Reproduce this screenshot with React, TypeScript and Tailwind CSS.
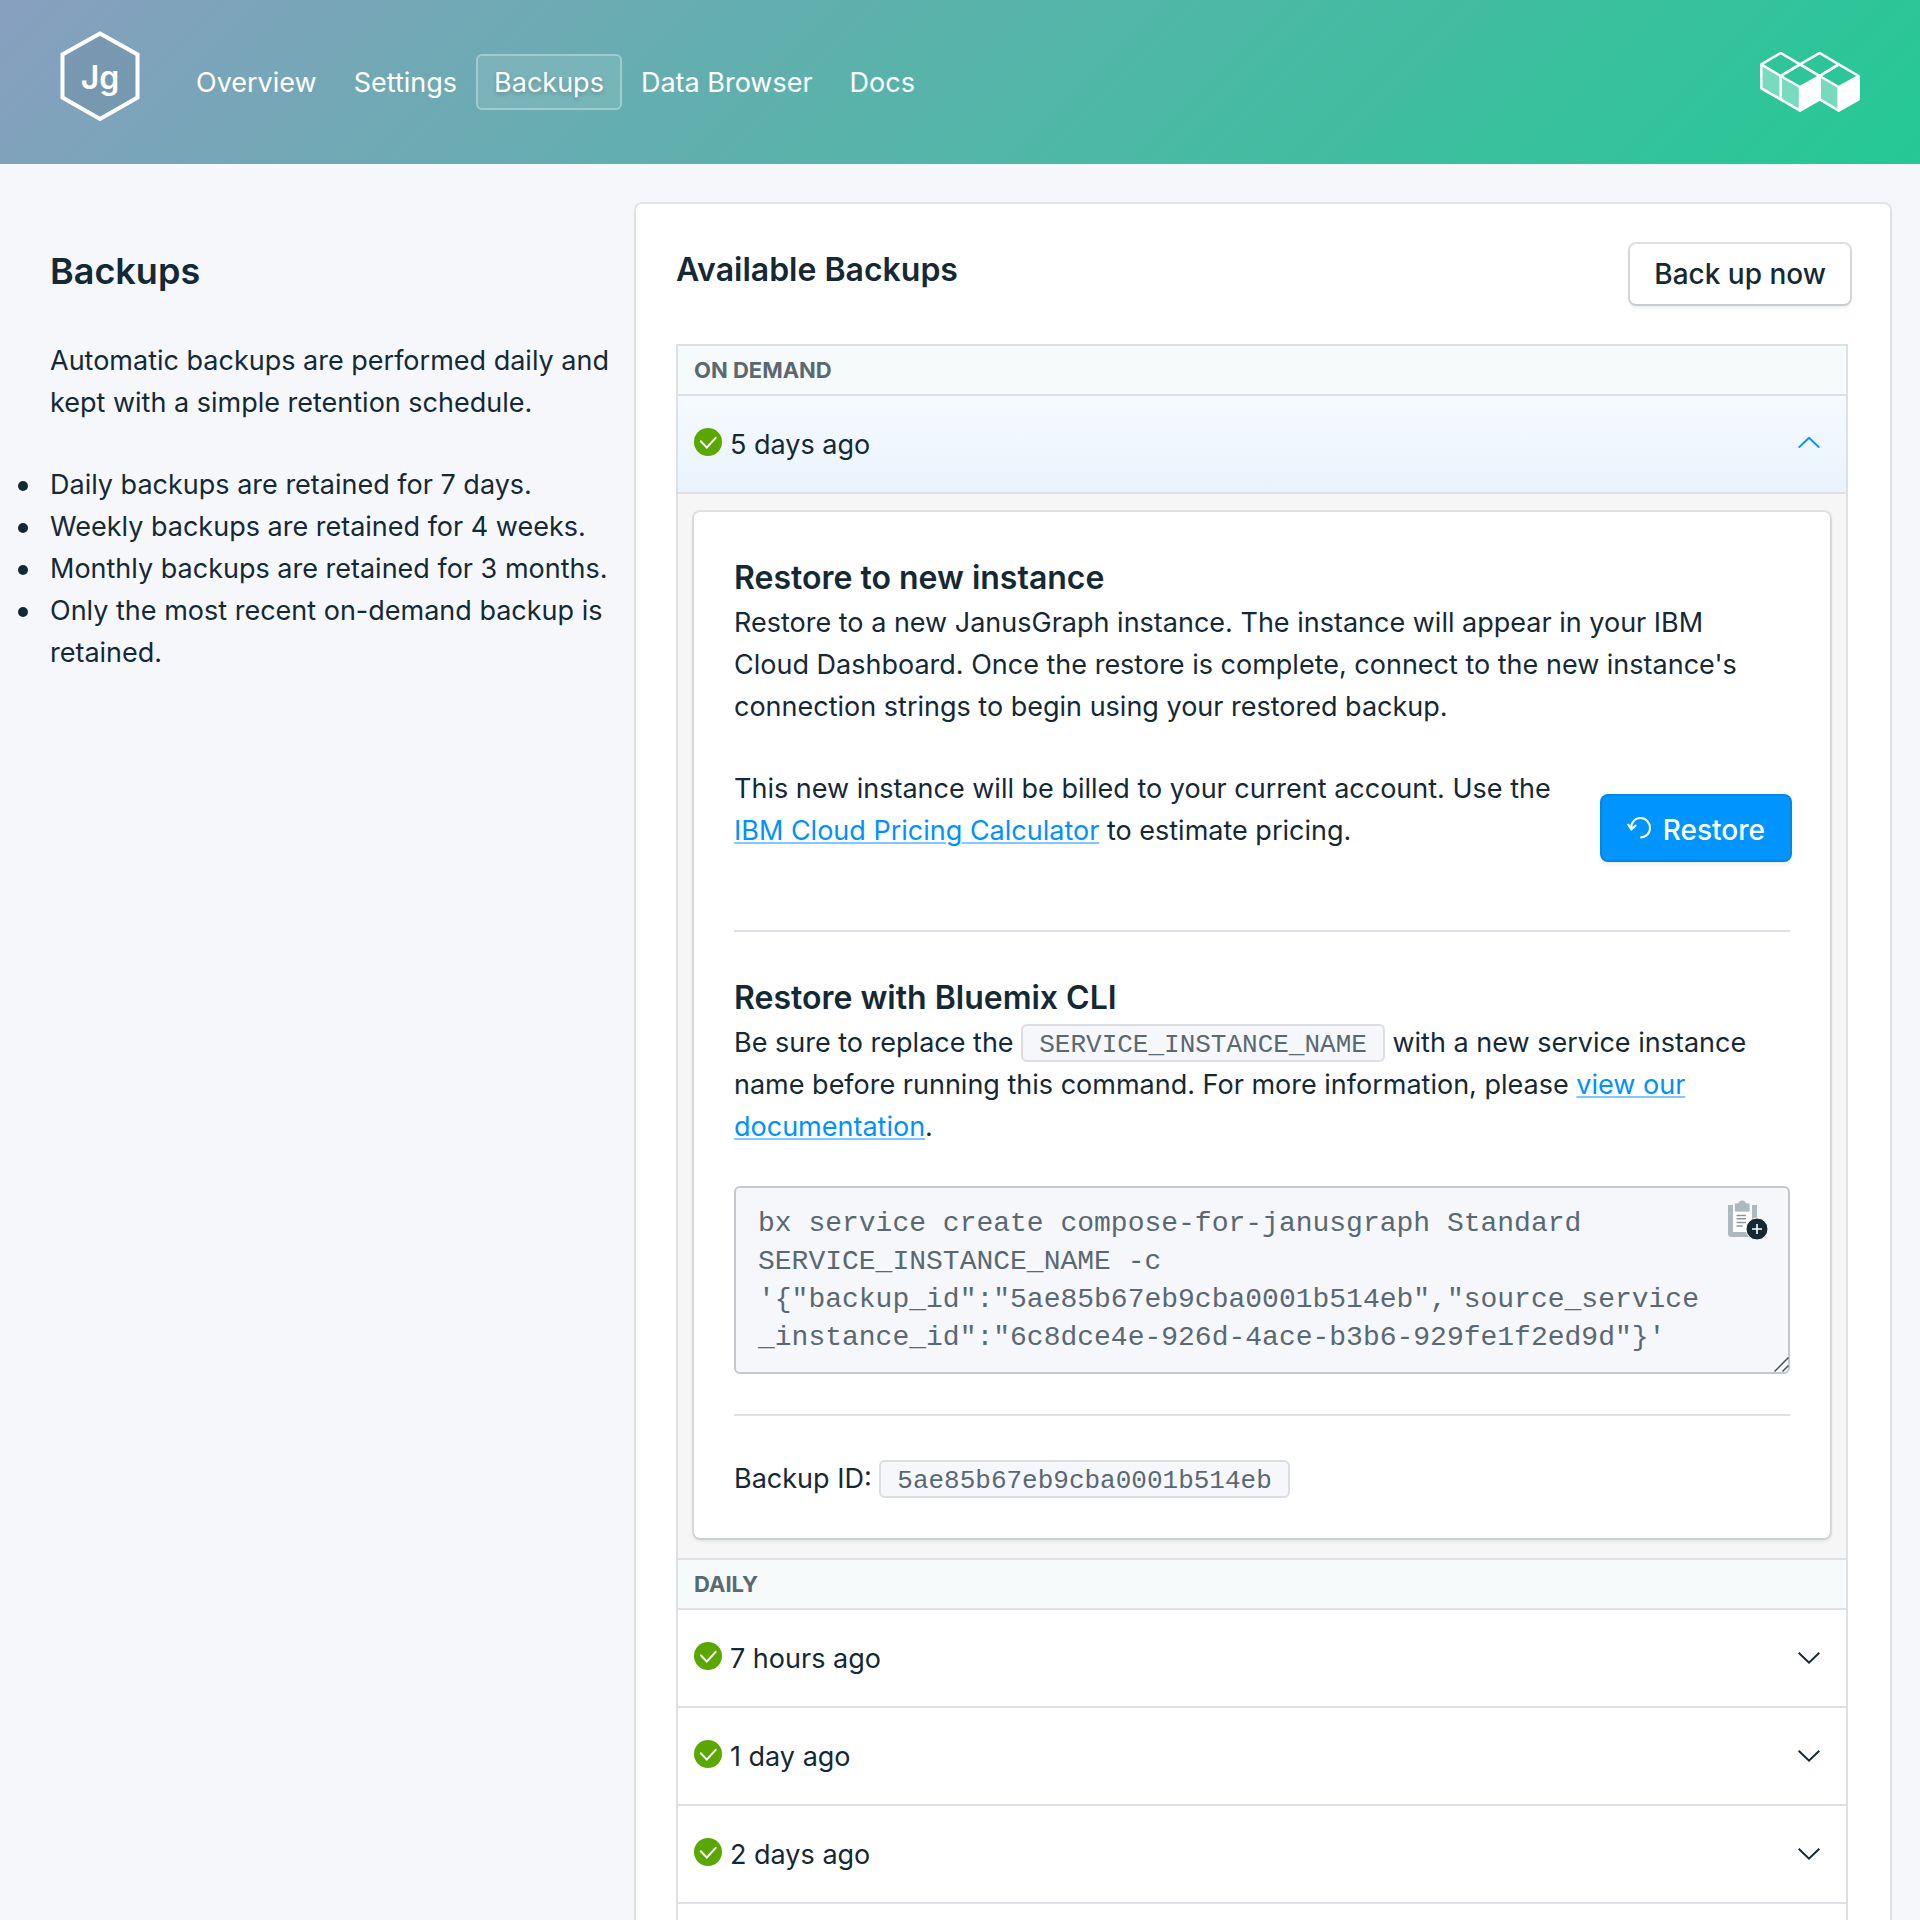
import type { ReactNode } from "react";

const navItems = ["Overview", "Settings", "Backups", "Data Browser", "Docs"];

const retention = [
  "Daily backups are retained for 7 days.",
  "Weekly backups are retained for 4 weeks.",
  "Monthly backups are retained for 3 months.",
  "Only the most recent on-demand backup is retained.",
];

const dailyBackups = ["7 hours ago", "1 day ago", "2 days ago"];

const backupId = "5ae85b67eb9cba0001b514eb";

const restoreCommand =
  'bx service create compose-for-janusgraph Standard SERVICE_INSTANCE_NAME -c \'{"backup_id":"5ae85b67eb9cba0001b514eb","source_service_instance_id":"6c8dce4e-926d-4ace-b3b6-929fe1f2ed9d"}\'';

function JanusGraphLogo() {
  return (
    <svg width="80" height="92" viewBox="0 0 80 92" role="img" aria-label="JanusGraph">
      <path
        d="M40 3.500 L77.500 24.500 V67.500 L40 89 L2.500 67.500 V24.500 Z"
        fill="#000000"
        fillOpacity="0.06"
        stroke="#ffffff"
        strokeWidth="4"
      />
      <text
        x="40"
        y="59"
        textAnchor="middle"
        fill="#ffffff"
        className="font-['Inter',sans-serif] text-[32px] font-semibold"
      >
        Jg
      </text>
    </svg>
  );
}

function CubesLogo() {
  return (
    <svg width="100" height="60" viewBox="180 96 300 180" role="img" aria-label="Compose">
      <g fill="#ffffff" fillOpacity="0.36">
        <path d="M183 133 L242 168 V238 L183 205 Z" />
        <path d="M242 168 L300 201 V273 L242 238 Z" />
        <path d="M359 168 L416 201 V273 L359 238 Z" />
      </g>
      <g fill="#ffffff">
        <path d="M300 201 L359 168 V238 L300 273 Z" />
        <path d="M416 201 L477 168 V238 L416 273 Z" />
      </g>
      <g fill="none" stroke="#ffffff" strokeWidth="7.500" strokeLinejoin="round">
        <path d="M184 133 L242 99 L300 133 L242 168 Z" />
        <path d="M242 168 L300 133 L359 168 L300 201 Z" />
        <path d="M300 133 L359 99 L416 133 L359 168 Z" />
        <path d="M359 168 L416 133 L476 168 L416 201 Z" />
        <path d="M184 133 V205 L242 238 V168 M242 238 L300 272 L359 238 L416 272 L476 238 V168" />
        <path d="M300 201 V272 M359 168 V238 M416 201 V272" />
      </g>
    </svg>
  );
}

function CheckIcon() {
  return (
    <svg width="28" height="28" viewBox="0 0 28 28" aria-hidden="true">
      <circle cx="14" cy="14" r="14" fill="#5aa700" />
      <path
        d="M6.800 13.200 L12.800 19.600 L21.700 9.800"
        fill="none"
        stroke="#ffffff"
        strokeWidth="2"
        strokeLinecap="round"
      />
    </svg>
  );
}

function Chevron({ up = false }: { up?: boolean }) {
  return (
    <svg width="22" height="14" viewBox="0 0 22 14" fill="none" aria-hidden="true">
      {up ? (
        <path d="M0.700 10.600 L11 0.800 L21.300 10.600" stroke="#0094ff" strokeWidth="2" />
      ) : (
        <path d="M0.700 1.700 L11 11.600 L21.300 1.700" stroke="#152935" strokeWidth="2" />
      )}
    </svg>
  );
}

function RestoreIcon() {
  return (
    <svg
      width="24"
      height="24"
      viewBox="0 0 24 24"
      fill="none"
      stroke="#ffffff"
      strokeWidth="2"
      aria-hidden="true"
    >
      <path d="M4.200 13.500 C3.400 7.200 7.600 2 13.600 2 C19 2 23 6.600 23 12 C23 17.400 18.800 21.600 13.200 21.600" />
      <path d="M0.800 8 L4.400 13.400 L9.200 9" />
    </svg>
  );
}

function ClipboardIcon() {
  return (
    <svg width="40" height="40" viewBox="0 0 40 40" aria-hidden="true">
      <path d="M0 5 H29 V37 H3.500 A3.500 3.500 0 0 1 0 33.500 Z" fill="#aeb8bf" />
      <path d="M5 5 H24 V32 H5 Z" fill="#ffffff" />
      <path
        d="M6.500 4 Q6.500 3 7.500 3 H10 Q11.500 0 14.300 0 Q17 0 18.500 3 H21 Q22 3 22 4 V10.500 Q22 12 20.500 12 H8 Q6.500 12 6.500 10.500 Z"
        fill="#aeb8bf"
        stroke="#f5f7fb"
        strokeWidth="0.800"
      />
      <path
        d="M8.500 15.500 H18 M8.500 18.800 H18 M8.500 22.500 H18 M8.500 26 H14.800"
        stroke="#8a959d"
        strokeWidth="1.600"
      />
      <circle cx="29" cy="29" r="11" fill="#152935" stroke="#ffffff" strokeWidth="1" />
      <path d="M29 24 V34 M24 29 H34" stroke="#ffffff" strokeWidth="1.600" />
    </svg>
  );
}

function ResizeGrip() {
  return (
    <svg
      width="15"
      height="15"
      viewBox="0 0 15 15"
      fill="none"
      stroke="#4b4f53"
      strokeWidth="1.500"
      className="pointer-events-none absolute right-px bottom-0.5"
      aria-hidden="true"
    >
      <path d="M0.500 14.500 L14.500 0.500 M8.500 14.500 L14.500 8.500" />
    </svg>
  );
}

function Code({ children }: { children: ReactNode }) {
  return (
    <code className="rounded-md border-2 border-[#dcdee3] bg-[#f5f7fb] px-4 pt-1 font-['Liberation_Mono',monospace] text-[26px] leading-none text-[#5a6872]">
      {children}
    </code>
  );
}

function TextLink({ children }: { children: ReactNode }) {
  return (
    <a
      href="#"
      className="text-[#0091ff] underline decoration-[#80c8ff] decoration-2 underline-offset-2"
    >
      {children}
    </a>
  );
}

function SectionTitle({ children }: { children: ReactNode }) {
  return (
    <h4 className="border-b-2 border-[#dde1e5] bg-[#f6fafb] px-4 text-[22px] leading-[48px] font-bold text-[#5a6872] uppercase">
      {children}
    </h4>
  );
}

function BackupRow({ label, open = false }: { label: string; open?: boolean }) {
  return (
    <button
      type="button"
      aria-expanded={open}
      className={
        "flex h-[98px] w-full items-center gap-2 border-b-2 border-[#dde1e5] pr-[26px] pl-4 text-left " +
        (open ? "bg-linear-to-b from-[#f6faff] to-[#e9f3fd]" : "bg-white")
      }
    >
      <span className="pb-1">
        <CheckIcon />
      </span>
      <span className="flex-1 pt-0.5">{label}</span>
      <Chevron up={open} />
    </button>
  );
}

function OpenBackup() {
  return (
    <div className="border-b-2 border-[#dde1e5] bg-[#f6f6f6] px-4 pt-[18px] pb-5">
      <div className="rounded-md bg-white px-10 pt-[42px] pb-[38px] shadow-[0_0_0_2px_rgba(21,41,53,0.09),0_2px_4px_rgba(21,41,53,0.16)]">
        <h3 className="text-[32px] leading-[48px] font-semibold">Restore to new instance</h3>
        <p className="pr-4">
          Restore to a new JanusGraph instance. The instance will appear in your IBM Cloud
          Dashboard. Once the restore is complete, connect to the new instance's connection
          strings to begin using your restored backup.
        </p>
        <div className="mt-10 flex items-center gap-8">
          <p className="flex-1 pb-9">
            This new instance will be billed to your current account. Use the{" "}
            <TextLink>IBM Cloud Pricing Calculator</TextLink> to estimate pricing.
          </p>
          <button
            type="button"
            className="flex h-16 shrink-0 items-center gap-3 rounded-md bg-[#0094ff] px-[25px] pt-1 text-[28px] font-medium text-white shadow-[0_0_0_2px_#0087ec,0_4px_4px_rgba(21,41,53,0.1)]"
          >
            <span className="pb-1">
              <RestoreIcon />
            </span>
            Restore
          </button>
        </div>
        <hr className="mt-[42px] border-t-2 border-[#dde1e5]" />
        <h3 className="mt-[42px] text-[32px] leading-[48px] font-semibold">
          Restore with Bluemix CLI
        </h3>
        <p>
          Be sure to replace the <Code>SERVICE_INSTANCE_NAME</Code> with a new service instance
          name before running this command. For more information, please{" "}
          <TextLink>view our documentation</TextLink>.
        </p>
        <div className="relative mt-[38px]">
          <textarea
            aria-label="Restore command"
            readOnly
            rows={4}
            spellCheck={false}
            defaultValue={restoreCommand}
            className="block w-full resize-none overflow-hidden rounded-md border-2 border-[#c3c8cc] bg-[#f5f7fb] pt-[17px] pr-20 pb-[15px] pl-[22px] font-['Liberation_Mono',monospace] text-[28px] leading-[38px] text-[#5a6872]"
          />
          <ResizeGrip />
          <button
            type="button"
            aria-label="Copy command"
            className="absolute top-3.5 right-[22px]"
          >
            <ClipboardIcon />
          </button>
        </div>
        <hr className="mt-10 border-t-2 border-[#dde1e5]" />
        <p className="mt-[42px]">
          Backup ID: <Code>{backupId}</Code>
        </p>
      </div>
    </div>
  );
}

export default function App() {
  return (
    <div className="flex min-h-screen flex-col bg-[#f5f7fb] font-['Inter',sans-serif] text-[27px] leading-[42px] text-[#152935]">
      <header className="flex h-[164px] items-center bg-[linear-gradient(135deg,#889fbf,#24c994)] px-[60px] text-white">
        <a href="#" className="pb-3">
          <JanusGraphLogo />
        </a>
        <nav className="ml-[38px] flex flex-1 gap-px">
          {navItems.map((item) => (
            <a
              key={item}
              href="#"
              aria-current={item === "Backups" ? "page" : undefined}
              className={
                "flex h-14 items-center rounded-md border-2 px-4 pt-0.5 " +
                (item === "Backups"
                  ? "border-white/30 bg-white/10 [text-shadow:0_2px_4px_rgba(0,0,0,0.2)]"
                  : "border-transparent")
              }
            >
              {item}
            </a>
          ))}
        </nav>
        <a href="#">
          <CubesLogo />
        </a>
      </header>

      <div className="flex flex-1">
        <aside className="w-[33.125%] shrink-0 pt-20 pr-4 pl-[50px]">
          <h2 className="text-[36px] leading-[54px] font-semibold">Backups</h2>
          <p className="mt-[42px]">
            Automatic backups are performed daily and kept with a simple retention schedule.
          </p>
          <ul className="mt-10">
            {retention.map((line) => (
              <li
                key={line}
                className="relative before:absolute before:top-[17px] before:-left-8 before:size-2.5 before:rounded-full before:bg-[#152935]"
              >
                {line}
              </li>
            ))}
          </ul>
        </aside>

        <main className="mt-10 mr-[30px] flex flex-1 flex-col rounded-t-md bg-white px-10 pt-10 shadow-[0_0_0_2px_rgba(21,41,53,0.08),0_2px_4px_rgba(21,41,53,0.1)]">
          <div className="flex items-start justify-between">
            <h3 className="pt-0.5 text-[32px] leading-[48px] font-semibold">Available Backups</h3>
            <button
              type="button"
              className="h-[60px] rounded-md bg-white px-6 text-[28px] font-medium shadow-[0_0_0_2px_rgba(21,41,53,0.14),0_3px_4px_rgba(21,41,53,0.14)]"
            >
              Back up now
            </button>
          </div>
          <section className="mt-10 mr-0.5 flex-1 border-x-2 border-t-2 border-[#dde1e5]">
            <SectionTitle>On demand</SectionTitle>
            <BackupRow label="5 days ago" open />
            <OpenBackup />
            <SectionTitle>Daily</SectionTitle>
            {dailyBackups.map((label) => (
              <BackupRow key={label} label={label} />
            ))}
          </section>
        </main>
      </div>
    </div>
  );
}
